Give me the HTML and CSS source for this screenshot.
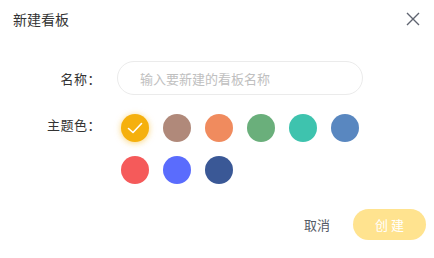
FILE: index.html
```html
<!DOCTYPE html>
<html>
<head>
  <meta charset="utf-8">
  <title>新建看板</title>
  <link rel="stylesheet" href="styles.css">
</head>
<body>
  <div class="dialog">
    <div class="dialog-header">
      <span class="dialog-title">新建看板</span>
      <span class="close-btn">
        <svg width="14" height="14" viewBox="0 0 14 14">
          <path d="M1 1 L13 13 M13 1 L1 13" stroke="#5f6470" stroke-width="1.4" fill="none"/>
        </svg>
      </span>
    </div>

    <div class="form">
      <div class="form-row name-row">
        <label class="form-label">名称：</label>
        <input class="name-input" type="text" placeholder="输入要新建的看板名称">
      </div>

      <div class="form-row color-row">
        <label class="form-label">主题色：</label>
        <div class="color-list">
          <span class="color-dot selected" style="background:#f5b00d">
            <svg width="16" height="12" viewBox="0 0 16 12">
              <path d="M1.5 6.5 L6 10.5 L14.5 1.5" stroke="#fff" stroke-width="1.6" fill="none" stroke-linecap="round" stroke-linejoin="round"/>
            </svg>
          </span>
          <span class="color-dot" style="background:#b0897a"></span>
          <span class="color-dot" style="background:#f08b5e"></span>
          <span class="color-dot" style="background:#6aaf7b"></span>
          <span class="color-dot" style="background:#3ec3ae"></span>
          <span class="color-dot" style="background:#5987c0"></span>
          <span class="color-dot" style="background:#f55a5a"></span>
          <span class="color-dot" style="background:#5a6cfd"></span>
          <span class="color-dot" style="background:#3a5896"></span>
        </div>
      </div>
    </div>

    <div class="dialog-footer">
      <button type="button" class="btn-cancel">取消</button>
      <button type="button" class="btn-create">创 建</button>
    </div>
  </div>
</body>
</html>
```

FILE: styles.css
```css
body {
    margin: 0;
    padding: 0;
    background-color: #ffffff;
    font-family: "Noto Sans CJK SC", "Noto Sans", sans-serif;
    color: #333333;
}

.dialog {
    width: 434px;
    height: 258px;
    box-sizing: border-box;
}

.dialog-header {
    display: flex;
    justify-content: space-between;
    align-items: center;
    padding: 7px 14px 0 13px;
    height: 24px;
}

.dialog-title {
    font-size: 14px;
    color: #333333;
    line-height: 20px;
}

.close-btn {
    display: flex;
    width: 14px;
    height: 14px;
}

.form {
    padding-top: 30px;
}

.form-row {
    display: flex;
}

.form-label {
    width: 117px;
    text-align: right;
    font-size: 13px;
    color: #333333;
    padding-right: 16px;
    flex-shrink: 0;
    box-sizing: border-box;
    letter-spacing: 0.5px;
}

.name-row {
    align-items: center;
    height: 34px;
}

.name-input {
    width: 246px;
    height: 34px;
    box-sizing: border-box;
    border: 1px solid #ebebeb;
    border-radius: 17px;
    padding: 0 22px;
    font-family: inherit;
    font-size: 13px;
    outline: none;
}

.name-input::placeholder {
    color: #c0c0c0;
}

.color-row {
    margin-top: 19px;
}

.color-row .form-label {
    padding-top: 1px;
}

.color-list {
    display: flex;
    flex-wrap: wrap;
    width: 260px;
    gap: 14px 14px;
    padding-left: 4px;
}

.color-dot {
    width: 28px;
    height: 28px;
    border-radius: 50%;
    display: flex;
    align-items: center;
    justify-content: center;
}

.color-dot.selected {
    box-shadow: 0 1px 6px rgba(245, 176, 13, 0.55);
}

.dialog-footer {
    display: flex;
    justify-content: flex-end;
    align-items: center;
    padding: 25px 8px 0 0;
}

.btn-cancel {
    background: none;
    border: none;
    font-family: inherit;
    font-size: 13px;
    color: #555a66;
    padding: 0;
    margin-right: 23px;
    cursor: pointer;
}

.btn-create {
    width: 73px;
    height: 31px;
    border: none;
    border-radius: 16px;
    background-color: #ffe38f;
    color: #ffffff;
    font-family: inherit;
    font-size: 13px;
    cursor: pointer;
}
```
